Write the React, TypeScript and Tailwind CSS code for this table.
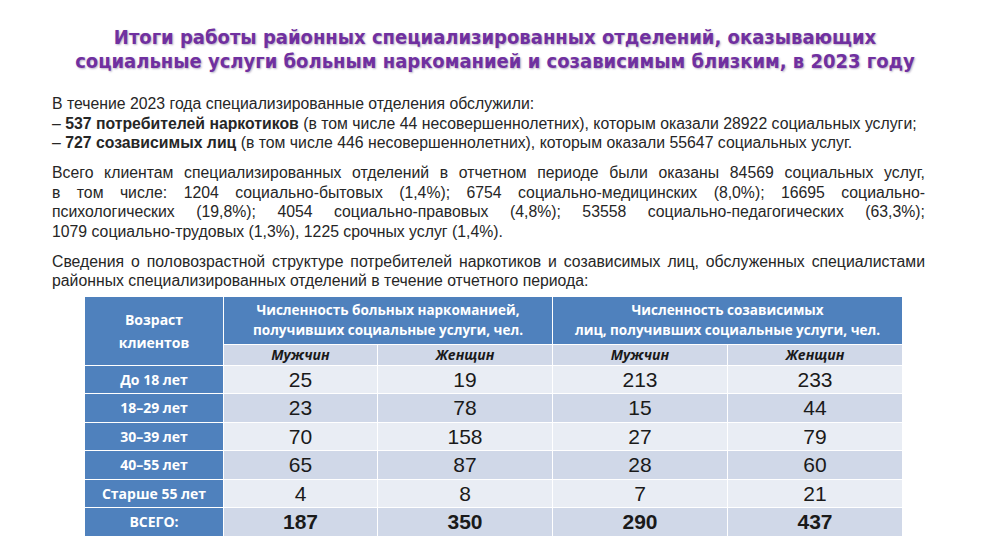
const ROWS = [
  { label: 'До 18 лет', v: [25, 19, 213, 233] },
  { label: '18–29 лет', v: [23, 78, 15, 44] },
  { label: '30–39 лет', v: [70, 158, 27, 79] },
  { label: '40–55 лет', v: [65, 87, 28, 60] },
  { label: 'Старше 55 лет', v: [4, 8, 7, 21] },
];

const TOTAL = [187, 350, 290, 437];

const SERVICES = [
  'Всего клиентам специализированных отделений в отчетном периоде были оказаны 84569 социальных услуг,',
  'в том числе: 1204 социально-бытовых (1,4%); 6754 социально-медицинских (8,0%); 16695 социально-',
  'психологических (19,8%); 4054 социально-правовых (4,8%); 53558 социально-педагогических (63,3%);',
];

const headFont = { fontFamily: '"Open Sans", "Noto Sans", sans-serif' };

// justified full line (PowerPoint-style stretched line)
function Line({ children }: { children: React.ReactNode }) {
  return <div className="text-justify [text-align-last:justify]">{children}</div>;
}

export default function App() {
  return (
    <div className="w-[990px] h-[557px] bg-white overflow-hidden font-['Liberation_Sans',Arial,sans-serif]">
      <h1 className="pt-[25px] text-center text-[20px] leading-[24px] font-bold text-[#7030a0] font-['Liberation_Sans_Narrow','DejaVu_Sans_Condensed','Liberation_Sans',sans-serif] [text-shadow:1px_1px_2px_rgba(80,60,110,0.4)]">
        Итоги работы районных специализированных отделений, оказывающих
        <br />
        социальные услуги больным наркоманией и созависимым близким, в 2023 году
      </h1>

      <div className="mt-[21px] pl-[52px] pr-[65px] text-[15.8px] leading-[19.5px] text-[#262626] whitespace-nowrap">
        <div>
          <div>В течение 2023 года специализированные отделения обслужили:</div>
          <div>
            – <b>537 потребителей наркотиков</b> (в том числе 44 несовершеннолетних), которым оказали 28922 социальных
            услуги;
          </div>
          <div>
            – <b>727 созависимых лиц</b> (в том числе 446 несовершеннолетних), которым оказали 55647 социальных услуг.
          </div>
        </div>
        <div className="mt-[10.5px]">
          {SERVICES.map((l) => (
            <Line key={l}>{l}</Line>
          ))}
          <div>1079 социально-трудовых (1,3%), 1225 срочных услуг (1,4%).</div>
        </div>
        <div className="mt-[10.5px]">
          <Line>
            Сведения о половозрастной структуре потребителей наркотиков и созависимых лиц, обслуженных специалистами
          </Line>
          <div>районных специализированных отделений в течение отчетного периода:</div>
        </div>
      </div>

      <div className="ml-[85px] mt-[6px] w-[817px] grid grid-cols-[138px_153px_174px_174px_174px] grid-rows-[47px_20px_repeat(6,27.5px)] gap-px bg-white">
        <div
          style={headFont}
          className="row-span-2 bg-[#4f81bd] text-white font-bold text-[14px] leading-[23px] flex items-center justify-center text-center"
        >
          Возраст
          <br />
          клиентов
        </div>
        <div
          style={headFont}
          className="col-span-2 bg-[#4f81bd] text-white font-bold text-[13.5px] leading-[20px] flex items-center justify-center text-center"
        >
          Численность больных наркоманией,
          <br />
          получивших социальные услуги, чел.
        </div>
        <div
          style={headFont}
          className="col-span-2 bg-[#4f81bd] text-white font-bold text-[13.5px] leading-[20px] flex items-center justify-center text-center"
        >
          Численность созависимых
          <br />
          лиц, получивших социальные услуги, чел.
        </div>
        {['Мужчин', 'Женщин', 'Мужчин', 'Женщин'].map((s, i) => (
          <div
            key={i}
            style={headFont}
            className="bg-[#d0d8e8] text-[#1a1a1a] italic font-bold text-[14px] flex items-center justify-center"
          >
            {s}
          </div>
        ))}

        {ROWS.map((r, ri) => (
          <Row key={r.label} label={r.label} values={r.v} shade={ri % 2 === 1} />
        ))}
        <Row label="ВСЕГО:" values={TOTAL} shade bold />
      </div>
    </div>
  );
}

function Row({ label, values, shade, bold }: { label: string; values: number[]; shade?: boolean; bold?: boolean }) {
  return (
    <>
      <div
        style={headFont}
        className="bg-[#4f81bd] text-white font-bold text-[14px] flex items-center justify-center"
      >
        {label}
      </div>
      {values.map((v, i) => (
        <div
          key={i}
          className={
            'flex items-center justify-center text-[21px] text-[#1a1a1a] ' +
            (shade ? 'bg-[#d0d8e8] ' : 'bg-[#e9edf4] ') +
            (bold ? 'font-bold' : '')
          }
        >
          {v}
        </div>
      ))}
    </>
  );
}
